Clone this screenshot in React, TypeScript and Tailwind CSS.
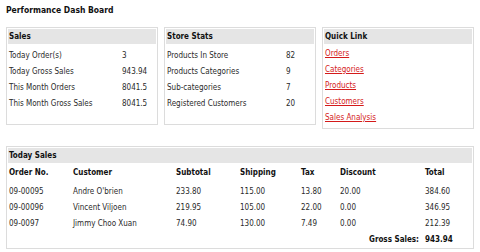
import React from "react";

const font = { fontFamily: '"DejaVu Sans Condensed", "DejaVu Sans", sans-serif' };

function Box({ title, children, className = "" }: { title: string; children: React.ReactNode; className?: string }) {
  return (
    <div className={`border border-[#dcdcdc] p-[1px] ${className}`}>
      <div className="h-[15px] bg-[#e5e5e5] px-[1px] font-bold text-[#111] flex items-center">{title}</div>
      {children}
    </div>
  );
}

function StatRow({ label, value, lw }: { label: string; value: string; lw: string }) {
  return (
    <div className="h-[16px] flex items-center px-[1px]">
      <span className={lw}>{label}</span>
      <span>{value}</span>
    </div>
  );
}

const links = ["Orders", "Categories", "Products", "Customers", "Sales Analysis"];

const sales = [
  ["09-00095", "Andre O'brien", "233.80", "115.00", "13.80", "20.00", "384.60"],
  ["09-00096", "Vincent Viljoen", "219.95", "105.00", "22.00", "0.00", "346.95"],
  ["09-0097", "Jimmy Choo Xuan", "74.90", "130.00", "7.49", "0.00", "212.39"],
];

const cols = ["w-[64px]", "w-[103px]", "w-[64px]", "w-[61px]", "w-[39px]", "w-[85px]", "w-[44px]"];
const heads = ["Order No.", "Customer", "Subtotal", "Shipping", "Tax", "Discount", "Total"];

export default function App() {
  return (
    <div className="w-[480px] h-[252px] bg-white text-[#2a2a2a] text-[8px] leading-none overflow-hidden" style={font}>
      <div className="pl-[6px] pt-[6px] h-[27px] font-bold text-[8.5px] text-[#111]">Performance Dash Board</div>
      <div className="grid grid-cols-3 gap-[6px] px-[6px] items-start">
        <Box title="Sales">
          <div className="mt-[4px] mb-[11px]">
            <StatRow label="Today Order(s)" value="3" lw="w-[113px]" />
            <StatRow label="Today Gross Sales" value="943.94" lw="w-[113px]" />
            <StatRow label="This Month Orders" value="8041.5" lw="w-[113px]" />
            <StatRow label="This Month Gross Sales" value="8041.5" lw="w-[113px]" />
          </div>
        </Box>
        <Box title="Store Stats">
          <div className="mt-[4px] mb-[11px]">
            <StatRow label="Products In Store" value="82" lw="w-[119px]" />
            <StatRow label="Products Categories" value="9" lw="w-[119px]" />
            <StatRow label="Sub-categories" value="7" lw="w-[119px]" />
            <StatRow label="Registered Customers" value="20" lw="w-[119px]" />
          </div>
        </Box>
        <Box title="Quick Link">
          <div className="mt-[2px] mb-[1px]">
            {links.map((l) => (
              <div key={l} className="h-[16px] flex items-center px-[1px]">
                <a href="#" className="text-[#d41a1a] underline">{l}</a>
              </div>
            ))}
          </div>
        </Box>
      </div>
      <div className="px-[6px] mt-[17px]">
        <Box title="Today Sales" className="h-[103px]">
          <div className="mt-[2px]">
            <div className="h-[16px] flex items-center px-[1px] font-bold text-[#111]">
              {heads.map((h, i) => (
                <span key={h} className={cols[i]}>{h}</span>
              ))}
            </div>
            <div className="h-[3px]" />
            {sales.map((r) => (
              <div key={r[0]} className="h-[16px] flex items-center px-[1px]">
                {r.map((c, i) => (
                  <span key={i} className={cols[i]}>{c}</span>
                ))}
              </div>
            ))}
            <div className="h-[15px] flex items-center px-[1px] font-bold text-[#111]">
              <span className="w-[416px] text-right pr-[6px]">Gross Sales:</span>
              <span>943.94</span>
            </div>
          </div>
        </Box>
      </div>
    </div>
  );
}
